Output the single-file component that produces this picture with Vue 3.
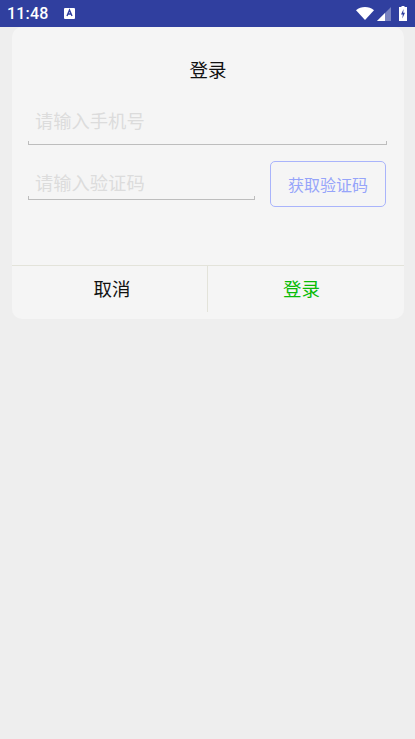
<script setup>
const title = '登录'
</script>

<template>
  <div class="page">
    <header class="status">
      <span class="time">11:48</span>
      <svg class="a-icon" width="11" height="11" viewBox="0 0 11 11">
        <rect width="11" height="11" rx="1" fill="#fff" />
        <path d="M3 8 L5.5 2 L8 8 M3.9 6 H7.1" fill="none" stroke="#303f9f" stroke-width="1.4" />
      </svg>
      <span class="spacer"></span>
      <svg class="wifi" width="18" height="13" viewBox="0 0 18 13">
        <path d="M0 3.2 C5 -1 13 -1 18 3.2 L9 13 Z" fill="#fff" />
      </svg>
      <svg class="signal" width="14" height="14" viewBox="0 0 14 14">
        <path d="M14 0 V14 H0 Z" fill="#fff" fill-opacity="0.35" />
        <path d="M8 6 V14 H0 Z" fill="#fff" />
      </svg>
      <svg class="battery" width="8" height="15" viewBox="0 0 8 15">
        <path d="M2.5 0 H5.5 V1 H8 V15 H0 V1 H2.5 Z" fill="#fff" />
        <path d="M4.6 3 L2 8.4 H3.8 L3.3 12.4 L6 6.8 H4.2 Z" fill="#303f9f" />
      </svg>
    </header>

    <section class="dialog">
      <h1 class="title">{{ title }}</h1>
      <div class="field phone">
        <span class="placeholder">请输入手机号</span>
      </div>
      <div class="code-row">
        <div class="field code">
          <span class="placeholder">请输入验证码</span>
        </div>
        <button class="get-code">获取验证码</button>
      </div>
      <footer class="actions">
        <button class="action cancel">取消</button>
        <button class="action confirm">登录</button>
      </footer>
    </section>
  </div>
</template>

<style scoped>
.page {
  height: 739px;
  background: #eeeeee;
  font-family: "Noto Sans CJK SC", "Roboto", sans-serif;
  overflow: hidden;
}
.status {
  height: 27px;
  background: #303f9f;
  display: flex;
  align-items: center;
  padding: 0 7px;
  color: #fff;
}
.time {
  font-family: Roboto, sans-serif;
  font-size: 16px;
  font-weight: 500;
  letter-spacing: 0.2px;
}
.a-icon {
  margin-left: 15px;
}
.spacer {
  flex: 1;
}
.wifi {
  margin-right: 3px;
}
.signal {
  margin-right: 8px;
}
.battery {
  margin-right: 1px;
}
.dialog {
  margin: 0 11px 0 12px;
  height: 292px;
  background: #f5f5f5;
  border-radius: 10px;
  display: flex;
  flex-direction: column;
  position: relative;
}
.title {
  margin: 0;
  padding-top: 28px;
  height: 28px;
  font-size: 18.5px;
  font-weight: 400;
  line-height: 28px;
  text-align: center;
  color: #111;
  box-sizing: content-box;
}
.field {
  position: relative;
  height: 32px;
  border-bottom: 1px solid #bdbdbd;
  box-sizing: content-box;
}
.field::before,
.field::after {
  content: "";
  position: absolute;
  bottom: 0;
  width: 1px;
  height: 3px;
  background: #bdbdbd;
}
.field::before {
  left: 0;
}
.field::after {
  right: 0;
}
.placeholder {
  display: block;
  margin-top: -1px;
  padding-left: 7px;
  font-size: 18.3px;
  line-height: 32px;
  color: #dcdcdc;
}
.phone {
  height: 39px;
  margin: 22px 17px 0 16px;
}
.code-row {
  display: flex;
  align-items: flex-start;
  margin: 16px 18px 0 16px;
  height: 59px;
}
.code {
  width: 227px;
  margin-top: 6px;
}
.get-code {
  width: 116px;
  height: 46px;
  margin-left: 15px;
  padding: 0;
  border: 1px solid #a9b4fb;
  border-radius: 5px;
  background: transparent;
  color: #96a4fa;
  font-family: inherit;
  font-size: 16px;
}
.actions {
  position: absolute;
  left: 0;
  right: 0;
  top: 238px;
  height: 46px;
  border-top: 1px solid #e3e3da;
  display: flex;
}
.action {
  padding: 0 0 2px;
  border: 0;
  background: transparent;
  font-family: inherit;
  font-size: 18.5px;
}
.cancel {
  flex: 0 0 196px;
  padding-left: 5px;
  color: #111;
  border-right: 1px solid #e3e3da;
}
.confirm {
  flex: 1;
  padding-right: 9px;
  color: #09bb07;
}
</style>
